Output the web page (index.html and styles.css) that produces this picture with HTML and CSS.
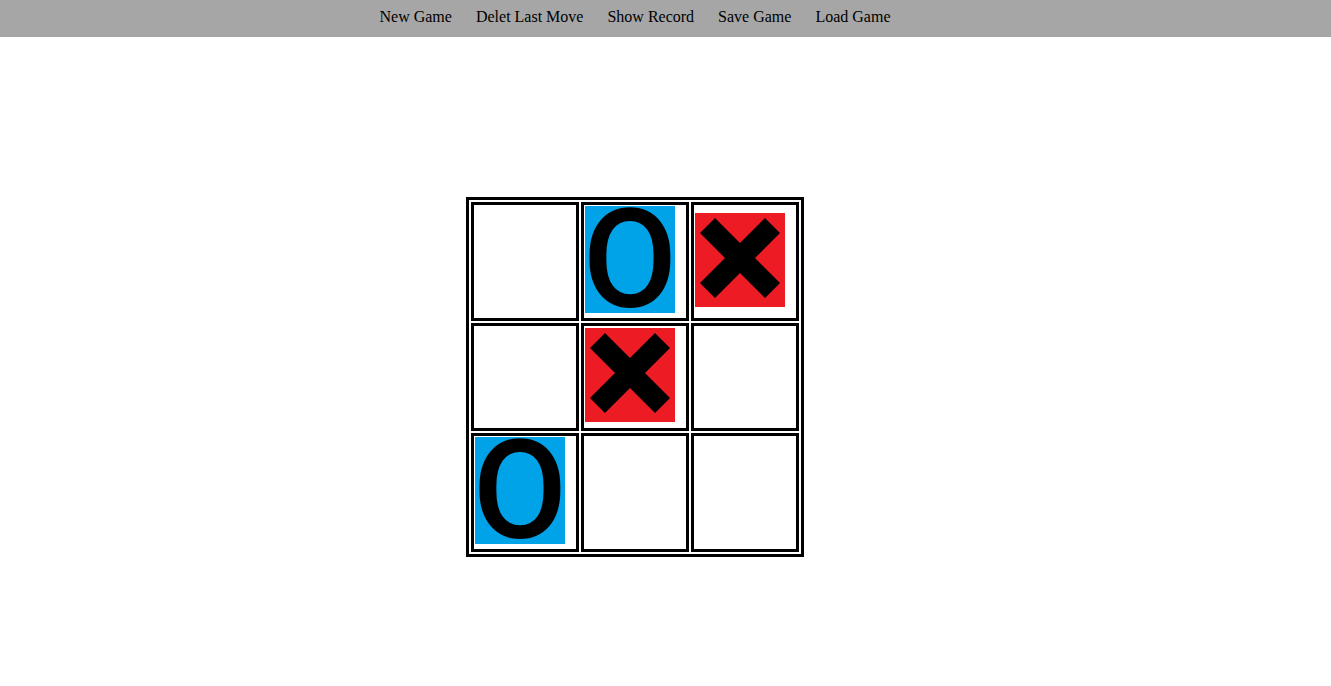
FILE: index.html
```html
<!DOCTYPE html>
<html>
<head>
<meta charset="utf-8">
<title>Tic Tac Toe</title>
<link rel="stylesheet" href="styles.css">
</head>
<body>
<nav class="topbar">
  <ul class="menu">
    <li class="menu-item">New Game</li>
    <li class="menu-item">Delet Last Move</li>
    <li class="menu-item">Show Record</li>
    <li class="menu-item">Save Game</li>
    <li class="menu-item">Load Game</li>
  </ul>
</nav>
<main class="stage">
  <table class="board">
    <tr>
      <td class="cell"></td>
      <td class="cell"><span class="mark mark-o"><span class="o-glyph">O</span></span></td>
      <td class="cell"><span class="mark mark-x"><svg class="x-icon" viewBox="0 0 90 94" width="90" height="94"><polygon points="5,20 20,5 45,30 70,5 85,20 60,45 85,70 70,85 45,60 20,85 5,70 30,45" fill="#000"/></svg></span></td>
    </tr>
    <tr>
      <td class="cell"></td>
      <td class="cell"><span class="mark mark-x"><svg class="x-icon" viewBox="0 0 90 94" width="90" height="94"><polygon points="5,20 20,5 45,30 70,5 85,20 60,45 85,70 70,85 45,60 20,85 5,70 30,45" fill="#000"/></svg></span></td>
      <td class="cell"></td>
    </tr>
    <tr>
      <td class="cell"><span class="mark mark-o"><span class="o-glyph">O</span></span></td>
      <td class="cell"></td>
      <td class="cell"></td>
    </tr>
  </table>
</main>
</body>
</html>
```
FILE: styles.css
```css
html, body {
  margin: 0;
  padding: 0;
  background: #ffffff;
}

body {
  font-family: "Liberation Serif", "Times New Roman", serif;
  font-size: 16px;
  color: #000;
}

.topbar {
  background: #a6a6a6;
  height: 37px;
  box-sizing: border-box;
  padding-top: 8px;
}

.menu {
  list-style: none;
  margin: 0;
  padding: 0;
  width: 1270px;
  display: flex;
  justify-content: center;
}

.menu-item {
  padding: 0 12px;
  line-height: 18px;
  cursor: pointer;
}

.stage {
  width: 1270px;
  padding-top: 160px;
}

.board {
  margin: 0 auto;
  border: 3px solid #000;
  border-spacing: 2px;
}

.cell {
  width: 100px;
  padding: 1px;
  border: 3px solid #000;
  vertical-align: middle;
  text-align: left;
}

.mark {
  display: inline-flex;
  justify-content: center;
  align-items: center;
  vertical-align: bottom;
  width: 90px;
}

.mark-o {
  height: 107px;
  margin-bottom: 4px;
  background: #00a2e8;
}

.o-glyph {
  display: block;
  flex: none;
  font-family: Roboto, "Open Sans", sans-serif;
  font-weight: 500;
  font-size: 137px;
  line-height: 137px;
  margin-top: 2px;
  color: #000;
}

.mark-x {
  height: 94px;
  margin: 1px 0 5px;
  background: #ed1c24;
}

.x-icon {
  display: block;
}
```
